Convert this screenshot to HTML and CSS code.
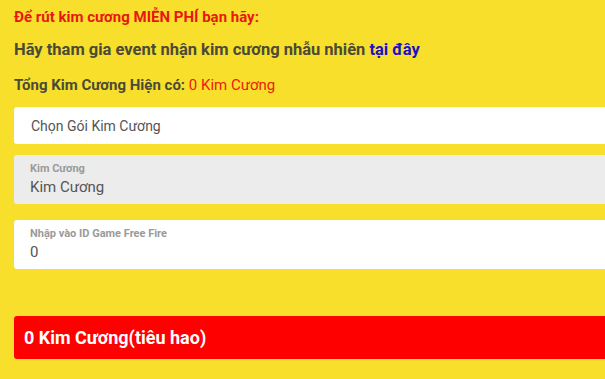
FILE: index.html
```html
<!DOCTYPE html>
<html lang="vi">
<head>
<meta charset="utf-8">
<link rel="stylesheet" href="styles.css">
</head>
<body>
<div class="wrap">
  <p class="l1">Để rút kim cương MIỄN PHÍ bạn hãy:</p>
  <p class="l2">Hãy tham gia event nhận kim cương nhẫu nhiên <a class="link" href="#">tại đây</a></p>
  <p class="l3">Tổng Kim Cương Hiện có: <span class="val">0 Kim Cương</span></p>
  <div class="select">Chọn Gói Kim Cương</div>
  <div class="field gray">
    <div class="lbl">Kim Cương</div>
    <div class="fv">Kim Cương</div>
  </div>
  <div class="field white">
    <div class="lbl">Nhập vào ID Game Free Fire</div>
    <div class="fv">0</div>
  </div>
  <div class="btn">0 Kim Cương(tiêu hao)</div>
</div>
</body>
</html>
```
FILE: styles.css
```css
html, body {
  margin: 0;
  padding: 0;
  background: #f8df2c;
  overflow: hidden;
  font-family: Roboto, "Liberation Sans", Arial, sans-serif;
}
.wrap {
  padding-left: 14px;
  width: 620px;
}
p { margin: 0; }
.l1 {
  margin-top: 7px;
  font-size: 15px;
  line-height: 20px;
  font-weight: 700;
  color: #e8170f;
}
.l2 {
  margin-top: 12px;
  font-size: 16.5px;
  line-height: 22px;
  font-weight: 700;
  color: #4b4a36;
}
.link {
  color: #1a10c8;
  text-decoration: none;
}
.l3 {
  margin-top: 14px;
  font-size: 15px;
  line-height: 20px;
  font-weight: 700;
  color: #4b4a36;
}
.val {
  font-weight: 400;
  color: #ee1a0d;
}
.select {
  margin-top: 12px;
  height: 37px;
  background: #fff;
  border-radius: 3px;
  box-sizing: border-box;
  padding-left: 17px;
  display: flex;
  align-items: center;
  font-size: 14px;
  color: #555;
}
.field {
  height: 49px;
  border-radius: 3px;
  box-sizing: border-box;
  padding: 8px 0 0 16px;
}
.gray {
  margin-top: 11px;
  background: #ececec;
}
.white {
  margin-top: 16px;
  background: #fff;
}
.lbl {
  font-size: 11px;
  line-height: 12px;
  font-weight: 700;
  color: #9a9a9a;
}
.fv {
  margin-top: 2px;
  font-size: 15px;
  line-height: 20px;
  color: #555;
}
.btn {
  margin-top: 47px;
  height: 43px;
  background: #ff0000;
  border-radius: 3px;
  box-sizing: border-box;
  padding-left: 10px;
  display: flex;
  align-items: center;
  font-size: 18px;
  font-weight: 700;
  color: #fff;
}
```
